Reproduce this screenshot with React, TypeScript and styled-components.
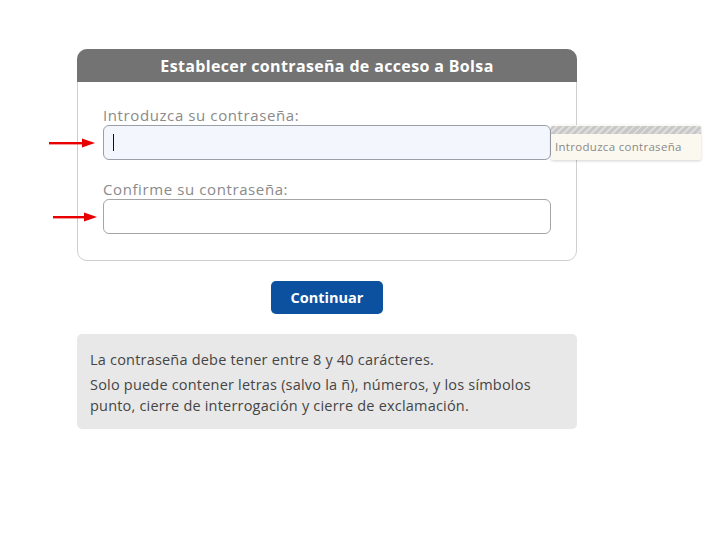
import React from "react";
import styled, { createGlobalStyle } from "styled-components";

const Global = createGlobalStyle`
  html, body { margin: 0; padding: 0; background: #ffffff; }
  body { font-family: "Open Sans", "Noto Sans", Arial, sans-serif; }
`;

const Page = styled.div`
  padding: 49px 0 0 77px;
  width: 500px;
  display: flex;
  flex-direction: column;
`;

const Card = styled.section`
  border: 1px solid #cfcfcf;
  border-radius: 10px;
  display: flex;
  flex-direction: column;
`;

const CardHeader = styled.h1`
  margin: -1px -1px 0 -1px;
  height: 33px;
  background: #737373;
  border-radius: 10px 10px 0 0;
  color: #ffffff;
  font-size: 16px;
  letter-spacing: 0.35px;
  font-weight: 700;
  display: flex;
  align-items: center;
  justify-content: center;
`;

const CardBody = styled.div`
  padding: 24px 25px 26px 25px;
  display: flex;
  flex-direction: column;
  gap: 20px;
`;

const Field = styled.div`
  display: flex;
  flex-direction: column;
  gap: 1px;
`;

const Label = styled.label`
  color: #8a8a8a;
  font-size: 15px;
  letter-spacing: 0.6px;
  line-height: 18px;
`;

const InputWrap = styled.div`
  position: relative;
`;

const Input = styled.div<{ $focused?: boolean }>`
  box-sizing: border-box;
  height: 35px;
  border: 1px solid ${(p) => (p.$focused ? "#9aa0a8" : "#a5a5a5")};
  border-radius: 6px;
  background: ${(p) => (p.$focused ? "#f3f7fd" : "#ffffff")};
  display: flex;
  align-items: center;
  padding-left: 9px;
`;

const Caret = styled.span`
  width: 1px;
  height: 17px;
  background: #111;
`;

const Arrow = styled.svg<{ $left: number }>`
  position: absolute;
  left: ${(p) => p.$left}px;
  top: 50%;
  margin-top: -5px;
`;

const Tooltip = styled.div`
  position: absolute;
  left: 100%;
  top: 0;
  width: 150px;
  height: 35px;
  box-sizing: border-box;
  background: #fbf8ef;
  box-shadow: 0 1px 3px rgba(0, 0, 0, 0.18);
  border-radius: 2px;
  display: flex;
  flex-direction: column;
`;

const TooltipBar = styled.div`
  height: 8px;
  margin-top: 1px;
  background: repeating-linear-gradient(
    135deg,
    #c8c8c8 0px,
    #c8c8c8 3px,
    #dddddd 3px,
    #dddddd 5px
  );
  border-radius: 2px 2px 0 0;
`;

const TooltipText = styled.div`
  color: #8a8a8a;
  font-size: 11.5px;
  letter-spacing: 0.3px;
  padding: 5px 0 0 4px;
`;

const Button = styled.button`
  align-self: center;
  margin-top: 20px;
  width: 112px;
  height: 33px;
  border: none;
  border-radius: 5px;
  background: #0b519f;
  color: #ffffff;
  font-family: inherit;
  font-size: 14.5px;
  font-weight: 700;
`;

const InfoBox = styled.div`
  margin-top: 20px;
  background: #e8e8e8;
  border-radius: 5px;
  padding: 15px 13px 13px 13px;
  color: #454545;
  font-size: 14.5px;
  letter-spacing: 0.2px;
  line-height: 21px;
`;

const InfoLine = styled.p`
  margin: 0 0 4px 0;
  &:last-child { margin: 0; }
`;

const RedArrow = ({ left, width }: { left: number; width: number }) => (
  <Arrow $left={left} width={width} height={10} viewBox={`0 0 ${width} 10`}>
    <rect x={0} y={4} width={width - 10} height={2.4} fill="#e80000" />
    <polygon points={`${width - 13},0.5 ${width},5 ${width - 13},9.5`} fill="#e80000" />
  </Arrow>
);

export default function App() {
  return (
    <>
      <Global />
      <Page>
        <Card>
          <CardHeader>Establecer contraseña de acceso a Bolsa</CardHeader>
          <CardBody>
            <Field>
              <Label>Introduzca su contraseña:</Label>
              <InputWrap>
                <RedArrow left={-54} width={46} />
                <Input $focused>
                  <Caret />
                </Input>
                <Tooltip>
                  <TooltipBar />
                  <TooltipText>Introduzca contraseña</TooltipText>
                </Tooltip>
              </InputWrap>
            </Field>
            <Field>
              <Label>Confirme su contraseña:</Label>
              <InputWrap>
                <RedArrow left={-50} width={44} />
                <Input />
              </InputWrap>
            </Field>
          </CardBody>
        </Card>
        <Button>Continuar</Button>
        <InfoBox>
          <InfoLine>La contraseña debe tener entre 8 y 40 carácteres.</InfoLine>
          <InfoLine>
            Solo puede contener letras (salvo la ñ), números, y los símbolos punto, cierre de
            interrogación y cierre de exclamación.
          </InfoLine>
        </InfoBox>
      </Page>
    </>
  );
}
